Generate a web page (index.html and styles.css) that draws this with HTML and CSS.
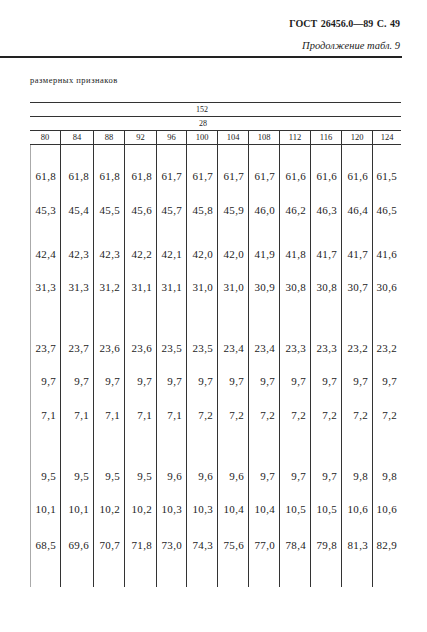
FILE: index.html
```html
<!DOCTYPE html>
<html lang="ru">
<head>
<meta charset="utf-8">
<title>ГОСТ 26456.0—89 С. 49</title>
<link rel="stylesheet" href="styles.css">
</head>
<body>
<div class="page">
  <header class="head">
    <div class="title">ГОСТ 26456.0—89 С. 49</div>
    <div class="subtitle">Продолжение табл. 9</div>
  </header>
  <div class="rule"></div>
  <div class="caption">размерных признаков</div>
  <div class="table">
    <div class="hrow"><span class="l152">152</span></div>
    <div class="hrow"><span class="l28">28</span></div>
    <div class="grid nums">
      <span>80</span><span>84</span><span>88</span><span>92</span><span>96</span><span>100</span><span>104</span><span>108</span><span>112</span><span>116</span><span>120</span><span>124</span>
    </div>
    <div class="grid row first">
      <span>61,8</span><span>61,8</span><span>61,8</span><span>61,8</span><span>61,7</span><span>61,7</span><span>61,7</span><span>61,7</span><span>61,6</span><span>61,6</span><span>61,6</span><span>61,5</span>
    </div>
    <div class="grid row h44">
      <span>45,3</span><span>45,4</span><span>45,5</span><span>45,6</span><span>45,7</span><span>45,8</span><span>45,9</span><span>46,0</span><span>46,2</span><span>46,3</span><span>46,4</span><span>46,5</span>
    </div>
    <div class="grid row h33">
      <span>42,4</span><span>42,3</span><span>42,3</span><span>42,2</span><span>42,1</span><span>42,0</span><span>42,0</span><span>41,9</span><span>41,8</span><span>41,7</span><span>41,7</span><span>41,6</span>
    </div>
    <div class="grid row h61">
      <span>31,3</span><span>31,3</span><span>31,2</span><span>31,1</span><span>31,1</span><span>31,0</span><span>31,0</span><span>30,9</span><span>30,8</span><span>30,8</span><span>30,7</span><span>30,6</span>
    </div>
    <div class="grid row h33">
      <span>23,7</span><span>23,7</span><span>23,6</span><span>23,6</span><span>23,5</span><span>23,5</span><span>23,4</span><span>23,4</span><span>23,3</span><span>23,3</span><span>23,2</span><span>23,2</span>
    </div>
    <div class="grid row h34">
      <span>9,7</span><span>9,7</span><span>9,7</span><span>9,7</span><span>9,7</span><span>9,7</span><span>9,7</span><span>9,7</span><span>9,7</span><span>9,7</span><span>9,7</span><span>9,7</span>
    </div>
    <div class="grid row h61">
      <span>7,1</span><span>7,1</span><span>7,1</span><span>7,1</span><span>7,1</span><span>7,2</span><span>7,2</span><span>7,2</span><span>7,2</span><span>7,2</span><span>7,2</span><span>7,2</span>
    </div>
    <div class="grid row h33">
      <span>9,5</span><span>9,5</span><span>9,5</span><span>9,5</span><span>9,6</span><span>9,6</span><span>9,6</span><span>9,7</span><span>9,7</span><span>9,7</span><span>9,8</span><span>9,8</span>
    </div>
    <div class="grid row h36">
      <span>10,1</span><span>10,1</span><span>10,2</span><span>10,2</span><span>10,3</span><span>10,3</span><span>10,4</span><span>10,4</span><span>10,5</span><span>10,5</span><span>10,6</span><span>10,6</span>
    </div>
    <div class="grid row h52">
      <span>68,5</span><span>69,6</span><span>70,7</span><span>71,8</span><span>73,0</span><span>74,3</span><span>75,6</span><span>77,0</span><span>78,4</span><span>79,8</span><span>81,3</span><span>82,9</span>
    </div>
  </div>
</div>
</body>
</html>
```
FILE: styles.css
```css
* {
  box-sizing: border-box;
}

body {
  margin: 0;
  background: #ffffff;
  color: #1c1c1c;
  font-family: "Liberation Serif", "Times New Roman", serif;
}

.page {
  width: 427px;
  height: 632px;
  overflow: hidden;
}

.head {
  padding: 17px 27px 0 0;
  text-align: right;
}

.title {
  font-size: 10px;
  font-weight: bold;
  line-height: 14px;
  word-spacing: 1px;
}

.subtitle {
  margin-top: 8px;
  font-size: 10.5px;
  font-style: italic;
  line-height: 14px;
}

.rule {
  width: 402px;
  height: 2px;
  margin-top: 3px;
  background: #222;
}

.caption {
  margin: 16px 0 0 30px;
  font-size: 8.5px;
  line-height: 12px;
  letter-spacing: 0.5px;
}

.table {
  margin: 16px 0 0 30px;
  width: 371px;
}

.hrow {
  height: 14px;
  border-top: 1px solid #333;
  font-size: 8px;
  line-height: 13px;
}

.l152 {
  padding-left: 166px;
}

.l28 {
  padding-left: 169px;
}

.grid {
  display: grid;
  grid-template-columns: 30px 33px 31px 32px 30px 31px 31px 31px 31px 31px 31px 29px;
}

.nums {
  height: 15px;
  border-top: 1px solid #333;
  border-bottom: 1px solid #333;
  font-size: 8.5px;
  line-height: 13px;
}

.nums span {
  text-align: center;
  border-left: 1px solid #333;
}

.nums span:first-child {
  border-left: none;
}

.row span {
  border-left: 1px solid #333;
  text-align: right;
  padding-right: 4px;
  font-size: 11px;
  line-height: 20px;
  letter-spacing: 0.3px;
}

.row span:first-child {
  border-left-color: #aaa;
}

.first {
  height: 55px;
}

.first span {
  padding-top: 21px;
}

.h33 { height: 33px; }
.h34 { height: 34px; }
.h36 { height: 36px; }
.h44 { height: 44px; }
.h52 { height: 52px; }
.h61 { height: 61px; }
```
